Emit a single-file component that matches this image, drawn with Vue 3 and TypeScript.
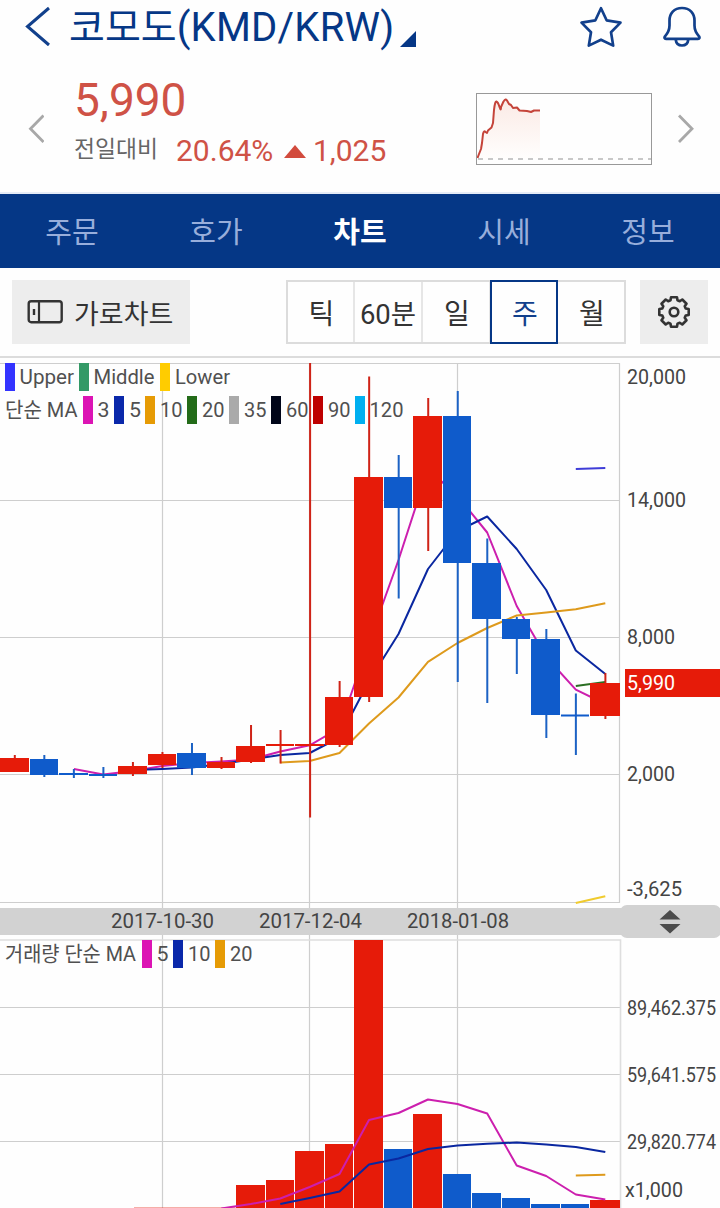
<script setup lang="ts">
type Dir = 'up' | 'down'
interface Candle { x: number; w: number; top: number; bottom: number; high: number; low: number; dir: Dir }
interface Label { text: string; x: number; y: number; w: number }
interface Swatch { x: number; y: number; color: string }

const tabs: string[] = ['주문', '호가', '차트', '시세', '정보']
const periods: string[] = ['틱', '60분', '일', '주', '월']

const rows: [number, number, number, number, number, number, Dir][] = [
  [0, 29, 758, 772, 755, 772, 'up'],
  [30, 28, 759, 775, 755, 777, 'down'],
  [59, 29, 773, 775, 769, 778, 'down'],
  [89, 28, 774, 776, 767, 778, 'down'],
  [118, 29, 766, 774, 762, 776, 'up'],
  [148, 28, 754, 765, 752, 768, 'up'],
  [177, 29, 753, 768, 743, 775, 'down'],
  [207, 28, 762, 768, 757, 769, 'up'],
  [236, 29, 746, 762, 725, 763, 'up'],
  [266, 28, 744, 746, 730, 763.5, 'up'],
  [295, 29, 744, 746, 363, 817.5, 'up'],
  [325, 28, 697, 745, 681, 747, 'up'],
  [354, 29, 477, 697, 376.5, 702, 'up'],
  [384, 28, 477, 508, 455, 598.5, 'down'],
  [413, 29, 416, 508, 398, 551, 'up'],
  [443, 28, 416, 563, 391, 682, 'down'],
  [472, 29, 563, 619, 538.5, 703, 'down'],
  [502, 28, 619, 639, 617, 674, 'down'],
  [531, 29, 639, 715, 629, 738, 'down'],
  [561, 28, 714.5, 716.5, 693.5, 755, 'down'],
  [590, 30, 683, 716, 673, 719, 'up'],
]
const candles: Candle[] = rows.map(([x, w, top, bottom, high, low, dir]) => ({ x, w, top, bottom, high, low, dir }))
const wickX = (i: number): number => 13.8 + i * 29.53

const volumes: [number, number, number, Dir][] = [
  [236, 29, 1185, 'up'], [266, 28, 1180, 'up'], [295, 29, 1151, 'up'], [325, 28, 1144, 'up'],
  [354, 29, 940, 'up'], [384, 28, 1149, 'down'], [413, 29, 1114, 'up'], [443, 28, 1174, 'down'],
  [472, 29, 1193, 'down'], [502, 28, 1198, 'down'], [531, 29, 1204, 'down'], [561, 28, 1204, 'down'],
  [590, 30, 1200, 'up'],
]

const priceLines = [
  { color: '#cc1fae', points: '73.9,769 103.3,774.5 132.8,771 162.3,766 191.8,763 221.3,761.5 250.8,759.5 280.3,751.5 309.7,745.3 339.5,728 369,642 398.5,560 428,469 457.5,496 487.2,532.5 516.7,606 546.2,657 575.8,689.7 605.3,704' },
  { color: '#0a27a0', points: '132.8,770 162.3,769 191.8,767.5 221.3,764 250.8,759.5 280.3,755 309.7,753 339.5,737.5 369,681 398.5,634 428,569 457.5,531 487.2,516.5 516.7,549 546.2,590 575.8,650.5 605.3,674' },
  { color: '#de9a1c', points: '280.3,762.5 309.7,761 339.5,753 369,723.5 398.5,697.5 428,661.8 457.5,643 487.2,628 516.7,615.5 546.2,612.5 575.8,609.3 605.3,603.3' },
  { color: '#2b6e22', points: '575.8,686 605.3,682' },
  { color: '#3f3dd8', points: '575.8,469 605.3,468' },
  { color: '#f0cb2e', points: '575.8,903 605.3,896.3' },
]
const volumeLines = [
  { color: '#cc1fae', points: '221.3,1208.5 250.8,1204 280.3,1198.5 309.7,1187 339.5,1174 369,1120 398.5,1113 428,1099.5 457.5,1104 487.2,1113.5 516.7,1165.5 546.2,1176 575.8,1194.5 605.3,1199.5' },
  { color: '#0a27a0', points: '280.3,1204 309.7,1198 339.5,1191.5 369,1164.5 398.5,1158.5 428,1149 457.5,1145.5 487.2,1143.8 516.7,1142.6 546.2,1144.5 575.8,1147 605.3,1152' },
  { color: '#de9a1c', points: '575.8,1175.6 605.3,1174.8' },
]

const swatches: Swatch[] = [
  { x: 5, y: 363, color: '#3333ff' }, { x: 79, y: 363, color: '#339966' }, { x: 160, y: 363, color: '#ffcc00' },
  { x: 83, y: 396, color: '#dc14b4' }, { x: 114, y: 396, color: '#0a28aa' }, { x: 145, y: 396, color: '#e69b05' },
  { x: 187, y: 396, color: '#236b19' }, { x: 229, y: 396, color: '#aaaaaa' }, { x: 271, y: 396, color: '#000519' },
  { x: 313, y: 396, color: '#be0000' }, { x: 355, y: 396, color: '#00aff0' },
  { x: 142, y: 940, color: '#dc14b4' }, { x: 173, y: 940, color: '#0a28aa' }, { x: 215, y: 940, color: '#e69b05' },
]
const legend: Label[] = [
  { text: 'Upper', x: 19.5, y: 384, w: 54.5 }, { text: 'Middle', x: 93.5, y: 384, w: 61 }, { text: 'Lower', x: 175, y: 384, w: 55 },
  { text: '단순 MA', x: 5, y: 417, w: 72.5 }, { text: '3', x: 97.5, y: 417, w: 12 }, { text: '5', x: 129, y: 417, w: 12 },
  { text: '10', x: 160, y: 417, w: 22.5 }, { text: '20', x: 202, y: 417, w: 22.5 }, { text: '35', x: 244, y: 417, w: 22.5 },
  { text: '60', x: 286, y: 417, w: 22.5 }, { text: '90', x: 328, y: 417, w: 22.5 }, { text: '120', x: 369.5, y: 417, w: 34 },
  { text: '거래량 단순 MA', x: 5, y: 961, w: 131 }, { text: '5', x: 156.5, y: 961, w: 12 },
  { text: '10', x: 188, y: 961, w: 22.5 }, { text: '20', x: 230, y: 961, w: 22.5 },
]
const axis: Label[] = [
  { text: '20,000', x: 627, y: 384, w: 59 }, { text: '14,000', x: 627, y: 507, w: 59 }, { text: '8,000', x: 627, y: 644, w: 48 },
  { text: '2,000', x: 627, y: 781, w: 48 }, { text: '-3,625', x: 627, y: 896, w: 55 },
  { text: '2017-10-30', x: 111, y: 928, w: 103 }, { text: '2017-12-04', x: 259, y: 928, w: 103 }, { text: '2018-01-08', x: 407, y: 928, w: 102 },
]
const volumeAxis: Label[] = [
  { text: '89,462.375', x: 627, y: 1014.5, w: 89 }, { text: '59,641.575', x: 627, y: 1081.5, w: 89 }, { text: '29,820.774', x: 627, y: 1148.5, w: 89 },
  { text: 'x1,000', x: 625, y: 1197, w: 58 },
]

function gearPath(cx: number, cy: number): string {
  const pts: string[] = []
  for (let i = 0; i < 8; i++) {
    const base = (i * Math.PI) / 4 - Math.PI / 2
    for (const [da, r] of [[-0.29, 12.2], [-0.2, 15], [0.2, 15], [0.29, 12.2]]) {
      pts.push(`${(cx + r * Math.cos(base + da)).toFixed(2)} ${(cy + r * Math.sin(base + da)).toFixed(2)}`)
    }
  }
  return `M${pts.join('L')}Z`
}
const gear = gearPath(18, 18)
</script>

<template>
  <main class="screen">
    <header class="titlebar">
      <svg class="back" width="26" height="42" viewBox="0 0 26 42"><path d="M24 2 2.5 20.5 24 39" fill="none" stroke="#12408c" stroke-width="3" /></svg>
      <h1 class="title"><span class="coin">코모도</span><span class="pair">(KMD/KRW)</span></h1>
      <svg class="corner" width="16" height="16" viewBox="0 0 16 16"><path d="M16 0V16H0Z" fill="#053786" /></svg>
      <svg class="star" width="44" height="44" viewBox="0 0 44 44"><path d="M22 3.2 27.600 15.300 41.500 17.600 32 27.200 34.200 40.600 22 34.700 9.800 40.600 12 27.200 2.500 17.600 16.400 15.300Z" fill="none" stroke="#12408c" stroke-width="2.700" stroke-linejoin="round" /></svg>
      <svg class="bell" width="40" height="44" viewBox="0 0 40 44"><path d="M20 3C12 3 7.500 8.500 7.500 15.500V20.500C7.500 26 5.500 28.500 3 31.300 2 32.800 2.400 33.800 4 33.800H36C37.600 33.800 38 32.800 37 31.300 34.500 28.500 32.500 26 32.500 20.500V15.500C32.500 8.500 28 3 20 3ZM13.800 35C14.200 38.500 16.800 40.500 20 40.500S25.800 38.500 26.200 35" fill="none" stroke="#12408c" stroke-width="2.700" stroke-linejoin="round" /></svg>
    </header>

    <section class="quote">
      <svg class="prev" width="16" height="30" viewBox="0 0 16 30"><path d="M15.500 1.500 2.500 14.800 15.500 28" fill="none" stroke="#a8a8a8" stroke-width="2.800" /></svg>
      <div class="figures">
        <div class="price">5,990</div>
        <div class="change">
          <span class="caption">전일대비</span><span class="rate">20.64%</span>
          <svg class="rise" width="22" height="13" viewBox="0 0 22 13"><path d="M11 0 22 13H0Z" fill="#d24b3d" /></svg>
          <span class="diff">1,025</span>
        </div>
      </div>
      <svg class="spark" width="176" height="72" viewBox="0 0 176 72">
        <defs><linearGradient id="fade" x1="0" y1="0" x2="0" y2="1"><stop offset="0" stop-color="#fbeae5" /><stop offset="1" stop-color="#fffefd" /></linearGradient></defs>
        <path d="M2 65 5 55 8 39 14 38 17 31 20 8 25 14 30 6 37 14 46 17 64 18V66H2Z" fill="url(#fade)" />
        <path d="M2 66H176" stroke="#c8c8c8" stroke-width="2" stroke-dasharray="5 5" />
        <path d="M1.500 65 3 61 5 56 6 50 7 41Q8 37 9.500 39L11 40 12 37.500 15.500 34.500 17 30 18 17Q19 8 20.500 8.500T23.500 14 25 14L27.500 8.500Q30 5 31 7.500L33 11 35 12 37 15 41 14.500 43.500 17.500 51 18 55 19 58 17.500H64" fill="none" stroke="#c5443a" stroke-width="2" stroke-linejoin="round" />
        <rect x="0.500" y="0.500" width="175" height="71" fill="none" stroke="#999" />
      </svg>
      <svg class="next" width="16" height="30" viewBox="0 0 16 30"><path d="M1 1.500 14 14.800 1 28" fill="none" stroke="#a8a8a8" stroke-width="2.800" /></svg>
    </section>

    <nav class="tabs">
      <a v-for="(tab, i) in tabs" :key="tab" class="tab" :class="{ current: i === 2 }">{{ tab }}</a>
    </nav>

    <section class="toolbar">
      <button class="landscape">
        <svg width="36" height="24" viewBox="0 0 36 24"><rect x="1.700" y="1.200" width="33" height="21" rx="2.500" fill="none" stroke="#333" stroke-width="2.400" /><path d="M12 1V23" stroke="#333" stroke-width="2.200" /><path d="M7 9V15" stroke="#333" stroke-width="2.400" /></svg>
        <span>가로차트</span>
      </button>
      <div class="periods">
        <button v-for="(p, i) in periods" :key="p" class="period" :class="{ chosen: i === 3, wide: i === 1 }"><span>{{ p }}</span></button>
      </div>
      <button class="settings">
        <svg width="36" height="36" viewBox="0 0 36 36"><path :d="gear" fill="none" stroke="#333" stroke-width="2.600" stroke-linejoin="round" /><circle cx="18" cy="18" r="4.300" fill="none" stroke="#333" stroke-width="2.600" /></svg>
      </button>
    </section>

    <svg class="chart" width="720" height="850" viewBox="0 358 720 850">
      <g stroke="#cecece" stroke-width="1.200" fill="none">
        <path d="M0 363.500H619.500V902.500H0M0 500.500H619M0 637.500H619M0 774.500H619" />
        <path d="M162.500 363V940M309.500 363V940M457.500 363V940" />
        <path d="M162.500 940V1208M309.500 940V1208M457.500 940V1208M0 1007.500H620M0 1074.500H620M0 1141.500H620" />
      </g>
      <path d="M0 940H620.500V1208" fill="none" stroke="#dedede" stroke-width="1.600" />
      <rect x="0" y="908" width="640" height="27" fill="#d2d2d2" />
      <rect x="620" y="905" width="101" height="33" rx="7" fill="#d2d2d2" />
      <path d="M670 910 680.500 919.500H659.500ZM670 933.500 680.500 924H659.500Z" fill="#4c4c4c" />

      <rect v-for="s in swatches" :key="`${s.x}-${s.y}`" :x="s.x" :y="s.y" width="10" height="28" :fill="s.color" />
      <polyline v-for="l in priceLines" :key="l.points" class="line" :points="l.points" :stroke="l.color" />
      <g v-for="(c, i) in candles" :key="c.x" :class="c.dir">
        <rect class="wick" :x="wickX(i)" :y="c.high" width="2" :height="c.low - c.high" />
        <rect :x="c.x" :y="c.top" :width="c.w" :height="c.bottom - c.top" />
      </g>
      <rect class="up faint" x="134" y="1207" width="101" height="1" />
      <rect v-for="v in volumes" :key="v[0]" :class="v[3]" :x="v[0]" :y="v[2]" :width="v[1]" :height="1208 - v[2]" />
      <polyline v-for="l in volumeLines" :key="l.points" class="line" :points="l.points" :stroke="l.color" />

      <text v-for="t in legend" :key="`${t.x}-${t.y}`" class="legend" :x="t.x" :y="t.y" :textLength="t.w" lengthAdjust="spacingAndGlyphs">{{ t.text }}</text>
      <text v-for="t in axis" :key="`${t.x}-${t.y}`" class="axis" :x="t.x" :y="t.y" :textLength="t.w" lengthAdjust="spacingAndGlyphs">{{ t.text }}</text>
      <text v-for="t in volumeAxis" :key="t.text" class="axis small" :x="t.x" :y="t.y" :textLength="t.w" lengthAdjust="spacingAndGlyphs">{{ t.text }}</text>
      <rect class="up" x="625" y="669" width="95" height="28" />
      <text class="axis last" x="627" y="690" textLength="48" lengthAdjust="spacingAndGlyphs">5,990</text>
    </svg>
  </main>
</template>

<style>
html, body { margin: 0; background: #fefefe; }
</style>

<style scoped>
.screen {
  width: 720px;
  height: 1208px;
  overflow: hidden;
  display: flex;
  flex-direction: column;
  background: #fefefe;
  font-family: Roboto, "Noto Sans CJK KR", sans-serif;
}
svg { display: block; flex: none; }
button { border: 0; padding: 0; font: inherit; box-sizing: border-box; }
.titlebar { height: 76px; display: flex; align-items: flex-start; color: #053786; }
.back { margin: 6px 0 0 25px; }
.title { margin: 0 0 0 18px; width: 326px; font-weight: 400; font-size: 40px; line-height: 56px; white-space: nowrap; }
.coin { font-size: 39px; }
.pair { letter-spacing: 0.25px; }
.corner { margin: 31px 0 0 5px; }
.star { margin: 5px 0 0 163px; }
.bell { margin: 5px 0 0 39px; }
.quote { height: 116px; display: flex; align-items: flex-start; border-bottom: 2px solid #e6ecf7; }
.prev { margin: 38px 0 0 28px; }
.figures { margin-left: 30px; width: 402px; }
.price { height: 54px; line-height: 49px; font-size: 46px; color: #cf5246; }
.change { height: 40px; display: flex; align-items: center; font-size: 30px; line-height: 40px; color: #cf5246; }
.caption { width: 102px; font-size: 22.8px; color: #666; white-space: nowrap; }
.rate { width: 108px; padding-top: 1px; }
.rise { margin-top: 3px; }
.diff { margin-left: 7px; padding-top: 1px; }
.spark { margin-top: 17px; }
.next { margin: 38px 0 0 26px; }
.tabs { height: 74px; display: flex; background: #053786; }
.tab { width: 144px; text-align: center; font-size: 29px; line-height: 79px; height: 74px; color: #98aedb; }
.current { color: #fff; font-weight: 700; }
.toolbar { width: 696px; height: 76px; flex: none; display: flex; align-items: flex-start; padding: 12px 12px 0; border-bottom: 2px solid #dcdcdc; }
.landscape { width: 178px; height: 64px; display: flex; align-items: center; padding-left: 15px; background: #ededed; color: #333; font-size: 27px; }
.landscape span { margin-left: 11px; white-space: nowrap; }
.periods { margin-left: 96px; width: 340px; height: 64px; display: flex; box-sizing: border-box; border: 2px solid #dcdcdc; }
.period { width: 68px; height: 60px; flex: none; background: #fefefe; border-right: 2px solid #e6e6e6; font-size: 28px; color: #333; white-space: nowrap; }
.period span { padding-left: 2px; }
.period:first-child { width: 67px; }
.period:last-child { border-right: 0; width: 66px; }
.period.wide { font-size: 27.5px; }
.period.wide span { padding-left: 0; }
.period.chosen { height: 64px; margin: -2px 0 0 -1px; border: 2px solid #053786; color: #12408c; }
.settings { margin-left: 14px; width: 68px; height: 64px; display: grid; place-items: center; background: #ededed; }
.line { fill: none; stroke-width: 2; stroke-linejoin: round; }
.up { fill: #e61b09; }
.down { fill: #0f5bcb; }
.up .wick { fill: #cf2317; }
.down .wick { fill: #1c62c4; }
.faint { opacity: 0.35; }
.legend { font-size: 21px; fill: #505050; }
.axis { font-size: 21px; fill: #444; }
.small { font-size: 19.5px; }
.last { fill: #fff; }
</style>
